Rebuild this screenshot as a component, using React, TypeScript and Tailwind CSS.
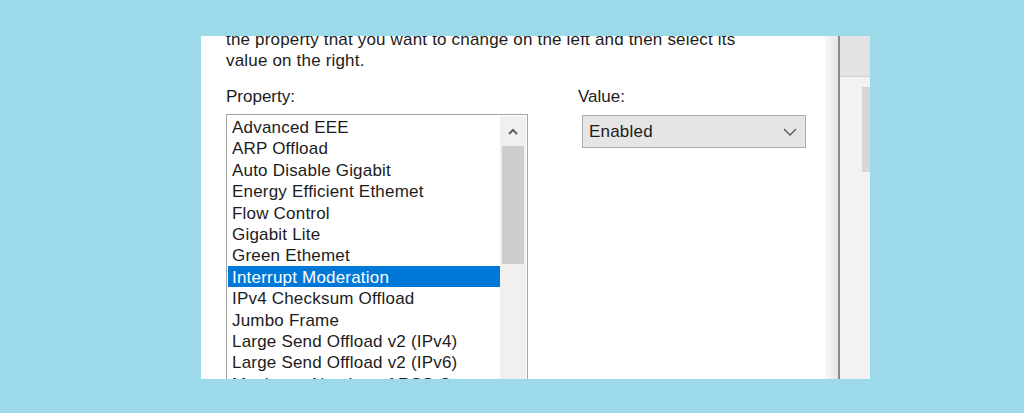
import React from "react";

const items = [
  "Advanced EEE",
  "ARP Offload",
  "Auto Disable Gigabit",
  "Energy Efficient Ethemet",
  "Flow Control",
  "Gigabit Lite",
  "Green Ethemet",
  "Interrupt Moderation",
  "IPv4 Checksum Offload",
  "Jumbo Frame",
  "Large Send Offload v2 (IPv4)",
  "Large Send Offload v2 (IPv6)",
  "Maximum Number of RSS Queues",
];

export default function App() {
  return (
    <div
      className="w-[1024px] h-[413px] bg-[#9cd9e9] pt-[36px] pl-[201px] overflow-hidden"
      style={{ fontFamily: '"Liberation Sans", Arial, sans-serif' }}
    >
      <div className="w-[669px] h-[343px] flex overflow-hidden bg-white">
        {/* main content */}
        <div className="w-[624px] h-full pl-[25px] text-[17px] text-[#1c1c1c] overflow-hidden">
          <div className="mt-[-7px] leading-[21px] tracking-[0.18px]">
            <div className="whitespace-nowrap">the property that you want to change on the left and then select its</div>
            <div>value on the right.</div>
          </div>
          <div className="flex mt-[15px]">
            <div className="w-[302px]">
              <div className="leading-[21px]">Property:</div>
              <div className="mt-[7px] h-[300px] border border-[#a3a3a3] flex p-[1px]">
                <div className="flex-1 tracking-[0.2px]">
                  {items.map((it) => (
                    <div
                      key={it}
                      className={
                        "pl-[4px] h-[21.4px] pt-[2px] leading-[19.4px] whitespace-nowrap " +
                        (it === "Interrupt Moderation" ? "bg-[#0078d7] text-white" : "")
                      }
                    >
                      {it}
                    </div>
                  ))}
                </div>
                <div className="w-[26px] bg-[#f0f0f0] flex flex-col items-center">
                  <div className="h-[30px] flex items-center justify-center">
                    <svg width="10" height="7" viewBox="0 0 10 7">
                      <path d="M1 6 L5 2 L9 6" fill="none" stroke="#606060" strokeWidth="2" />
                    </svg>
                  </div>
                  <div className="w-[22px] h-[118px] bg-[#cdcdcd]" />
                </div>
              </div>
            </div>
            <div className="ml-[50px]">
              <div className="leading-[21px]">Value:</div>
              <div className="mt-[8px] ml-[4px] w-[224px] h-[33px] bg-[#e5e5e5] border border-[#adadad] flex items-center justify-between pl-[6px] pr-[8px] tracking-[0.2px]">
                <span>Enabled</span>
                <svg width="14" height="8" viewBox="0 0 14 8">
                  <path d="M1 1 L7 7 L13 1" fill="none" stroke="#555" strokeWidth="1.3" />
                </svg>
              </div>
            </div>
          </div>
        </div>
        {/* gradient strip */}
        <div className="w-[13px] h-full bg-gradient-to-r from-[#f7f7f7] to-[#e6e6e6]" />
        <div className="w-[2px] h-full bg-[#8a8a8a]" />
        {/* right panel */}
        <div className="flex-1 h-full bg-[#f2f2f2] flex flex-col">
          <div className="h-[41px] bg-[#e3e3e5] border-b border-[#d2d2d2]" />
          <div className="flex justify-end pt-[10px]">
            <div className="w-[8px] h-[85px] bg-[#d6d6d6]" />
          </div>
        </div>
      </div>
    </div>
  );
}
